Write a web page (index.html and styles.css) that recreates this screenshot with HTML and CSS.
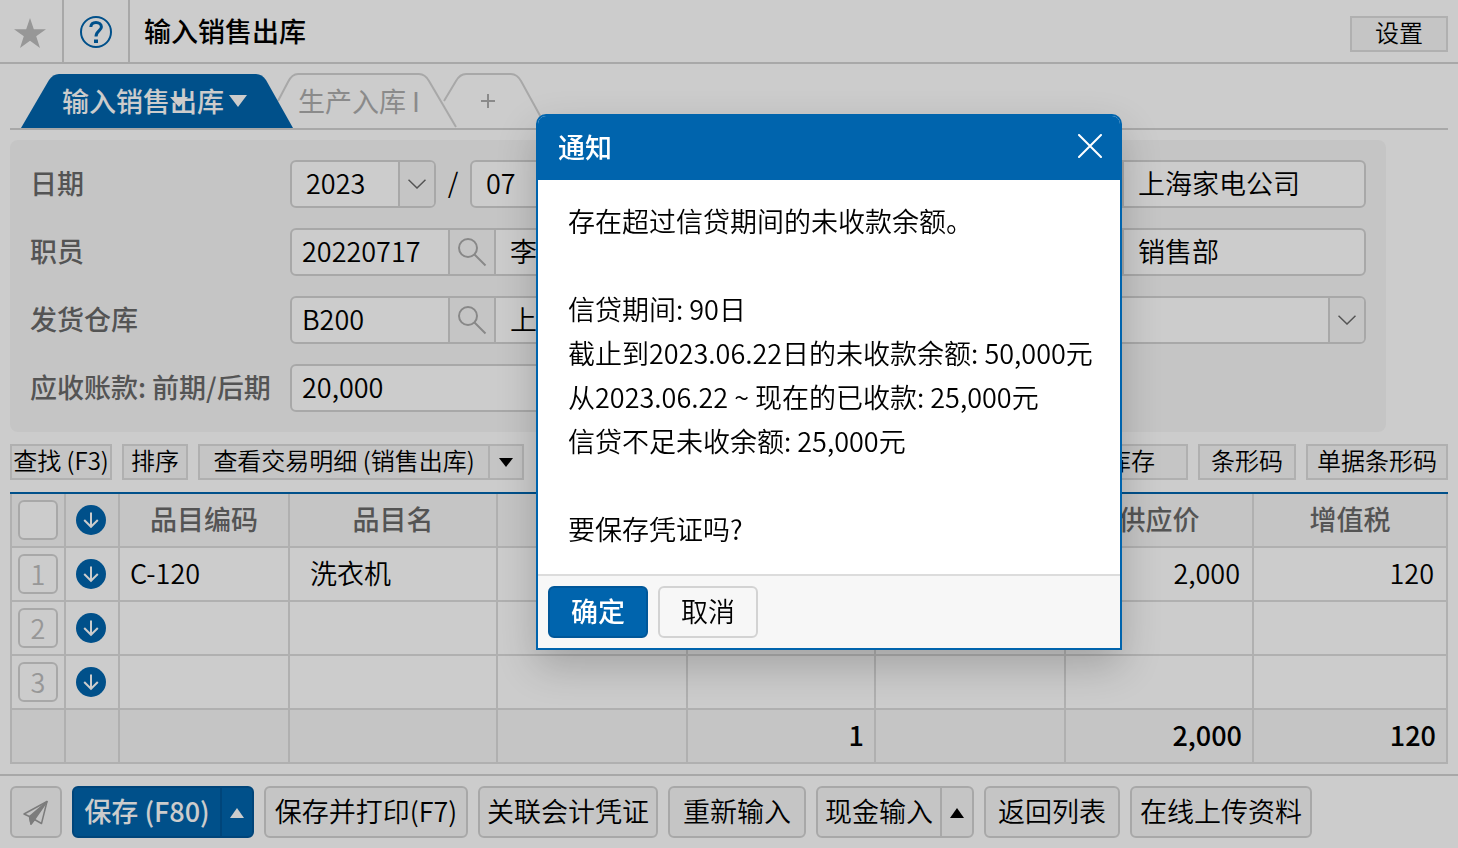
FILE: index.html
```
<!DOCTYPE html>
<html lang="zh-CN">
<head>
    <meta charset="UTF-8">
    <meta name="viewport" content="width=device-width, initial-scale=1.0">
    <link rel="stylesheet" href="styles.css">
    <title>输入销售出库</title>
</head>
<body>
    <svg class="defs" width="0" height="0">
        <symbol id="down" viewBox="0 0 30 30">
            <circle cx="15" cy="15" r="15" fill="#0064ad"/>
            <path d="M15 7.5V21.5M8.2 15L15 21.8L21.8 15" fill="none" stroke="#fff" stroke-width="2"/>
        </symbol>
        <symbol id="search" viewBox="0 0 30 30">
            <circle cx="11" cy="11" r="9" fill="none" stroke="#ababab" stroke-width="2"/>
            <path d="M17.5 17.5L28.5 28.5" stroke="#ababab" stroke-width="2"/>
        </symbol>
        <symbol id="chevron" viewBox="0 0 18 10">
            <path d="M0.5 0.8L9 9L17.5 0.8" fill="none" stroke="#6a6a6a" stroke-width="1.5"/>
        </symbol>
    </svg>

    <header class="header">
        <button class="header-icon" aria-label="收藏">
            <svg width="32" height="30" viewBox="0 0 32 30"><path d="M16 0L19.8 11.3H32L22.2 18.3L26 30L16 22.8L6 30L9.8 18.3L0 11.3H12.2Z" fill="#bdbdbd"/></svg>
        </button>
        <button class="header-icon" aria-label="帮助">
            <svg width="32" height="32" viewBox="0 0 32 32">
                <circle cx="16" cy="16" r="15" fill="none" stroke="#0064ad" stroke-width="2"/>
                <path d="M10.8 11C11 7.8 13 6.4 16 6.4C19 6.4 21.4 8.2 21.4 11C21.4 14.6 16 15 16 20.5" fill="none" stroke="#0064ad" stroke-width="3"/>
                <rect x="14" y="23.5" width="4" height="3.5" fill="#0064ad"/>
            </svg>
        </button>
        <h1>输入销售出库</h1>
        <button class="btn-small btn-setting">设置</button>
    </header>

    <nav class="tabs">
        <button class="tab tab-active">
            <svg class="tab-bg" width="272" height="55" viewBox="0 0 272 55">
                <path d="M0 55L28 7Q32 1 38 1H235Q241 1 245 7L272 55Z" fill="#0064ad"/>
                <path d="M149 24H167L158 34Z" fill="#fff"/>
            </svg>
            <span>输入销售出库</span>
            <svg class="tab-arrow" width="18" height="12"><path d="M0 0H18L9 12Z" fill="#fff"/></svg>
        </button>
        <button class="tab tab-product">
            <svg class="tab-bg" width="190" height="55" viewBox="0 0 190 55">
                <path d="M9 28L19 9Q23 1 29 1H150Q156 1 160 8L187 54" fill="none" stroke="#d3d3d3" stroke-width="2"/>
            </svg>
            <span>生产入库 I</span>
        </button>
        <button class="tab tab-add" aria-label="添加">
            <svg class="tab-bg" width="101" height="55" viewBox="0 0 101 55">
                <path d="M1 28L13 8Q17 1 23 1H68Q74 1 78 8L100 48" fill="none" stroke="#d3d3d3" stroke-width="2"/>
            </svg>
            <svg class="plus" width="14" height="14"><path d="M7 0V14M0 7H14" stroke="#adadad" stroke-width="2"/></svg>
        </button>
    </nav>

    <form class="panel">
        <label for="year">日期</label>
        <div class="date">
            <div class="group year">
                <select id="year"><option>2023</option></select>
                <span class="addon addon-narrow"><svg width="18" height="10"><use href="#chevron"/></svg></span>
            </div>
            <span class="slash">/</span>
            <div class="group month">
                <select aria-label="月"><option>07</option></select>
                <span class="addon addon-narrow"><svg width="18" height="10"><use href="#chevron"/></svg></span>
            </div>
        </div>
        <div class="group">
            <input class="code" type="text" aria-label="客户编码">
            <button type="button" class="addon" aria-label="搜索客户"><svg width="30" height="30"><use href="#search"/></svg></button>
            <input class="name" type="text" aria-label="客户" value="上海家电公司">
        </div>

        <label for="staff">职员</label>
        <div class="group">
            <input class="code" type="text" id="staff" value="20220717">
            <button type="button" class="addon" aria-label="搜索职员"><svg width="30" height="30"><use href="#search"/></svg></button>
            <input class="name" type="text" aria-label="职员姓名" value="李">
        </div>
        <div class="group">
            <input class="code" type="text" aria-label="部门编码">
            <button type="button" class="addon" aria-label="搜索部门"><svg width="30" height="30"><use href="#search"/></svg></button>
            <input class="name" type="text" aria-label="部门" value="销售部">
        </div>

        <label for="warehouse">发货仓库</label>
        <div class="group">
            <input class="code" type="text" id="warehouse" value="B200">
            <button type="button" class="addon" aria-label="搜索仓库"><svg width="30" height="30"><use href="#search"/></svg></button>
            <input class="name" type="text" aria-label="仓库名称" value="上">
        </div>
        <div class="group">
            <select aria-label="交易类型"><option></option></select>
            <span class="addon addon-narrow"><svg width="18" height="10"><use href="#chevron"/></svg></span>
        </div>

        <label for="receivable">应收账款: 前期/后期</label>
        <div class="group">
            <input class="code wide" type="text" id="receivable" value="20,000">
        </div>
    </form>

    <div class="toolbar">
        <button class="btn-small btn-find">查找 (F3)</button>
        <button class="btn-small btn-sort">排序</button>
        <div class="split-small">
            <button class="btn-small btn-view">查看交易明细 (销售出库)</button>
            <button class="btn-small btn-more" aria-label="更多"><svg width="14" height="9"><path d="M0 0H14L7 9Z"/></svg></button>
        </div>
        <button class="btn-small btn-stock">库存</button>
        <button class="btn-small btn-barcode">条形码</button>
        <button class="btn-small btn-slip">单据条形码</button>
    </div>

    <table class="grid">
        <colgroup>
            <col class="c-no"><col class="c-down"><col class="c-code"><col class="c-item"><col class="c-spec">
            <col class="c-qty"><col class="c-price"><col class="c-supply"><col class="c-tax">
        </colgroup>
        <thead>
            <tr>
                <th><input type="checkbox" class="row-no" aria-label="全选"></th>
                <th><button class="circle" aria-label="向下"><svg width="30" height="30"><use href="#down"/></svg></button></th>
                <th>品目编码</th>
                <th>品目名</th>
                <th></th>
                <th></th>
                <th></th>
                <th>供应价</th>
                <th>增值税</th>
            </tr>
        </thead>
        <tbody>
            <tr>
                <td><button class="row-no">1</button></td>
                <td><button class="circle" aria-label="向下"><svg width="30" height="30"><use href="#down"/></svg></button></td>
                <td class="code-cell">C-120</td>
                <td class="item-cell">洗衣机</td>
                <td></td><td></td><td></td>
                <td class="num">2,000</td>
                <td class="num">120</td>
            </tr>
            <tr>
                <td><button class="row-no">2</button></td>
                <td><button class="circle" aria-label="向下"><svg width="30" height="30"><use href="#down"/></svg></button></td>
                <td></td><td></td><td></td><td></td><td></td><td></td><td></td>
            </tr>
            <tr>
                <td><button class="row-no">3</button></td>
                <td><button class="circle" aria-label="向下"><svg width="30" height="30"><use href="#down"/></svg></button></td>
                <td></td><td></td><td></td><td></td><td></td><td></td><td></td>
            </tr>
        </tbody>
        <tfoot>
            <tr>
                <td></td><td></td><td></td><td></td><td></td>
                <td>1</td>
                <td></td>
                <td>2,000</td>
                <td>120</td>
            </tr>
        </tfoot>
    </table>

    <footer class="footer">
        <button class="btn btn-send" aria-label="发送">
            <svg width="26" height="26" viewBox="0 0 26 26" fill="none" stroke="#9c9c9c" stroke-width="1.5" stroke-linejoin="round">
                <path d="M1 14L24 1.5L18.5 23.5L11.5 19.5L8 24L6.5 16.5Z"/>
                <path d="M24 1.5L6.5 16.5L8 24L11.5 19.5Z" fill="#9c9c9c"/>
            </svg>
        </button>
        <div class="split">
            <button class="btn btn-primary btn-save">保存 (F80)</button>
            <button class="btn btn-primary btn-arrow" aria-label="更多保存"><svg width="14" height="10"><path d="M0 10H14L7 0Z" fill="#fff"/></svg></button>
        </div>
        <button class="btn btn-print">保存并打印(F7)</button>
        <button class="btn btn-voucher">关联会计凭证</button>
        <button class="btn btn-reset">重新输入</button>
        <div class="split">
            <button class="btn btn-cash">现金输入</button>
            <button class="btn btn-arrow" aria-label="更多现金"><svg width="14" height="10"><path d="M0 10H14L7 0Z"/></svg></button>
        </div>
        <button class="btn btn-list">返回列表</button>
        <button class="btn btn-upload">在线上传资料</button>
    </footer>

    <div class="overlay"></div>
    <div class="modal" role="dialog" aria-labelledby="modal-title">
        <div class="modal-header">
            <h2 id="modal-title">通知</h2>
            <button class="close" aria-label="关闭"><svg width="24" height="24"><path d="M1 1L23 23M23 1L1 23" stroke="#fff" stroke-width="2" stroke-linecap="round"/></svg></button>
        </div>
        <div class="modal-body">
            <p>存在超过信贷期间的未收款余额。</p>
            <p>信贷期间: 90日<br>截止到2023.06.22日的未收款余额: 50,000元<br>从2023.06.22 ~ 现在的已收款: 25,000元<br>信贷不足未收余额: 25,000元</p>
            <p>要保存凭证吗?</p>
        </div>
        <div class="modal-footer">
            <button class="btn btn-primary btn-ok">确定</button>
            <button class="btn btn-ok">取消</button>
        </div>
    </div>
</body>
</html>
```
FILE: styles.css
```
*{
    box-sizing: border-box;
}
body{
    margin: 0;
    font-family: "Noto Sans CJK SC", sans-serif;
    font-size: 27px;
    font-weight: 350;
    color: #000;
    background-color: #fff;
}
button, input, select{
    margin: 0;
    padding: 0;
    border: none;
    outline: none;
    background: none;
    border-radius: 0;
    font: inherit;
    color: inherit;
}
button{
    cursor: pointer;
    white-space: nowrap;
}
svg{
    display: block;
}
.defs{
    position: absolute;
}

/* header */
.header{
    display: flex;
    align-items: center;
    height: 64px;
    padding-right: 10px;
    border-bottom: 2px solid #d3d3d3;
}
.header-icon{
    display: flex;
    align-items: center;
    justify-content: center;
    width: 64px;
    height: 100%;
    padding: 4px 2px 0 0;
    border-right: 2px solid #d3d3d3;
}
.header-icon + .header-icon{
    width: 66px;
    padding: 2px 0 0;
}
.header h1{
    flex: 1;
    margin: 0;
    padding-left: 14px;
    font-size: 27px;
    font-weight: 500;
    line-height: 62px;
}
.btn-small{
    height: 36px;
    padding-bottom: 4px;
    border: 2px solid #dcdcdc;
    background-color: #f7f7f7;
    font-size: 24px;
    line-height: 28px;
}
.btn-setting{
    width: 98px;
    margin-top: 6px;
}

/* tabs */
.tabs{
    display: flex;
    height: 66px;
    margin: 0 10px;
    padding: 9px 0 0 11px;
    border-bottom: 2px solid #d3d3d3;
}
.tab{
    position: relative;
    display: flex;
    align-items: center;
    height: 55px;
    color: #adadad;
    font-weight: 400;
}
.tab span, .tab-arrow{
    position: relative;
}
.tab-bg{
    position: absolute;
    left: 0;
    top: 0;
}
.tab-active{
    width: 272px;
    padding-left: 41px;
    color: #fff;
    font-weight: 500;
    z-index: 1;
}
.tab-arrow{
    margin-left: 5px;
}
.tab-product{
    width: 190px;
    margin-left: -24px;
    padding-left: 29px;
}
.tab-add{
    width: 101px;
    margin-left: -16px;
    padding-left: 38px;
}

/* form */
.panel{
    display: grid;
    grid-template-columns: 260px 1fr 448px;
    row-gap: 20px;
    margin: 10px 72px 12px 10px;
    padding: 20px;
    border-radius: 8px;
    background-color: #f7f7f7;
}
.panel label{
    grid-column: 1;
    color: #6a6a6a;
    font-weight: 500;
    line-height: 46px;
    white-space: nowrap;
}
.date{
    display: flex;
}
.group{
    display: flex;
    height: 48px;
    border: 2px solid #d3d3d3;
    border-radius: 6px;
    background-color: #fff;
    overflow: hidden;
}
.panel > .group:nth-child(3n + 2){
    margin-right: 200px;
}
.year{
    width: 146px;
}
.month{
    width: 112px;
}
.slash{
    width: 34px;
    text-align: center;
    line-height: 44px;
}
.group input, .group select{
    padding-bottom: 4px;
}
.group select{
    flex: 1;
    min-width: 0;
    padding-left: 14px;
    appearance: none;
}
.addon{
    display: flex;
    align-items: center;
    justify-content: center;
    width: 48px;
    border: solid #d3d3d3;
    border-width: 0 2px;
    background-color: #f7f7f7;
}
.addon-narrow{
    width: 36px;
    border-right: none;
}
.code{
    width: 156px;
    padding-left: 10px;
}
.wide{
    width: 100%;
}
.name{
    flex: 1;
    min-width: 0;
    padding-left: 14px;
}

/* buttons over the grid */
.toolbar{
    display: flex;
    gap: 10px;
    margin: 0 10px 12px;
}
.btn-find{
    width: 102px;
}
.btn-sort{
    width: 66px;
}
.split-small, .split{
    display: flex;
}
.btn-view{
    width: 292px;
}
.btn-more{
    display: flex;
    align-items: center;
    justify-content: center;
    width: 36px;
    margin-left: -2px;
    padding: 0;
}
.btn-stock{
    width: 114px;
    margin-left: auto;
}
.btn-barcode{
    width: 98px;
}
.btn-slip{
    width: 142px;
}

/* grid */
.grid{
    width: calc(100% - 20px);
    margin: 0 10px;
    border-top: 2px solid #0064ad;
    border-spacing: 0;
    table-layout: fixed;
}
.c-no{ width: 56px; }
.c-down{ width: 54px; }
.c-code{ width: 170px; }
.c-item{ width: 208px; }
.c-spec, .c-price{ width: 190px; }
.c-qty, .c-supply{ width: 188px; }
.c-tax{ width: 194px; }
.grid th, .grid td{
    height: 54px;
    padding: 0;
    border: solid #dcdcdc;
    border-width: 0 2px 2px 0;
    line-height: 38px;
}
.grid th:nth-child(n + 3), .grid td:nth-child(n + 3){
    padding-bottom: 2px;
}
.grid th:first-child, .grid td:first-child{
    border-left-width: 2px;
}
.grid th, .grid tfoot td{
    background-color: #f7f7f7;
}
.grid th{
    color: #6a6a6a;
    font-weight: 500;
}
.grid tfoot td{
    padding-right: 10px;
    text-align: right;
    font-weight: 500;
}
.row-no{
    display: block;
    width: 40px;
    height: 40px;
    margin: 0 auto;
    border: 2px solid #d3d3d3;
    border-radius: 6px;
    background-color: #fff;
    color: #bdbdbd;
    line-height: 36px;
    appearance: none;
}
.circle{
    display: block;
    width: 30px;
    height: 30px;
    margin: 0 10px;
}
.grid .code-cell{
    padding-left: 10px;
}
.grid .item-cell{
    padding-left: 20px;
}
.grid .num{
    padding-right: 12px;
    text-align: right;
}

/* footer */
.footer{
    display: flex;
    gap: 10px;
    margin-top: 10px;
    padding: 10px;
    border-top: 2px solid #d3d3d3;
}
.btn{
    height: 52px;
    padding-bottom: 2px;
    border: 2px solid #d3d3d3;
    border-radius: 6px;
    background-color: #f7f7f7;
    line-height: 46px;
}
.btn-primary{
    border-color: #005799;
    background-color: #0064ad;
    color: #fff;
    font-weight: 500;
}
.btn-send, .btn-arrow{
    display: flex;
    align-items: center;
    justify-content: center;
    padding: 2px 0 0;
}
.btn-send{
    width: 52px;
}
.split .btn:first-child{
    border-radius: 6px 0 0 6px;
}
.split .btn-arrow{
    width: 34px;
    margin-left: -2px;
    border-radius: 0 6px 6px 0;
}
.btn-save{
    width: 150px;
}
.btn-print{
    width: 204px;
}
.btn-voucher{
    width: 180px;
}
.btn-reset{
    width: 138px;
}
.btn-cash{
    width: 126px;
}
.btn-list{
    width: 136px;
}
.btn-upload{
    width: 182px;
}

/* modal */
.overlay{
    position: fixed;
    inset: 0;
    z-index: 2;
    background-color: rgba(0, 0, 0, 0.2);
}
.modal{
    position: absolute;
    top: 114px;
    left: 536px;
    z-index: 3;
    width: 586px;
    border: 2px solid #0064ad;
    border-radius: 10px 10px 0 0;
    background-color: #fff;
    box-shadow: 0 16px 40px rgba(0, 0, 0, 0.2);
    overflow: hidden;
}
.modal-header{
    display: flex;
    align-items: center;
    justify-content: space-between;
    height: 64px;
    padding: 0 18px 4px 20px;
    background-color: #0064ad;
    color: #fff;
}
.modal-header h2{
    margin: 0;
    font-size: 27px;
    font-weight: 500;
}
.modal-body{
    padding: 19px 20px 23px 30px;
    line-height: 44px;
    white-space: nowrap;
}
.modal-body p{
    margin: 0 0 44px;
}
.modal-body p:last-child{
    margin: 0;
}
.modal-footer{
    display: flex;
    gap: 10px;
    padding: 10px;
    border-top: 2px solid #dcdcdc;
    background-color: #f7f7f7;
}
.btn-ok{
    width: 100px;
}
```
